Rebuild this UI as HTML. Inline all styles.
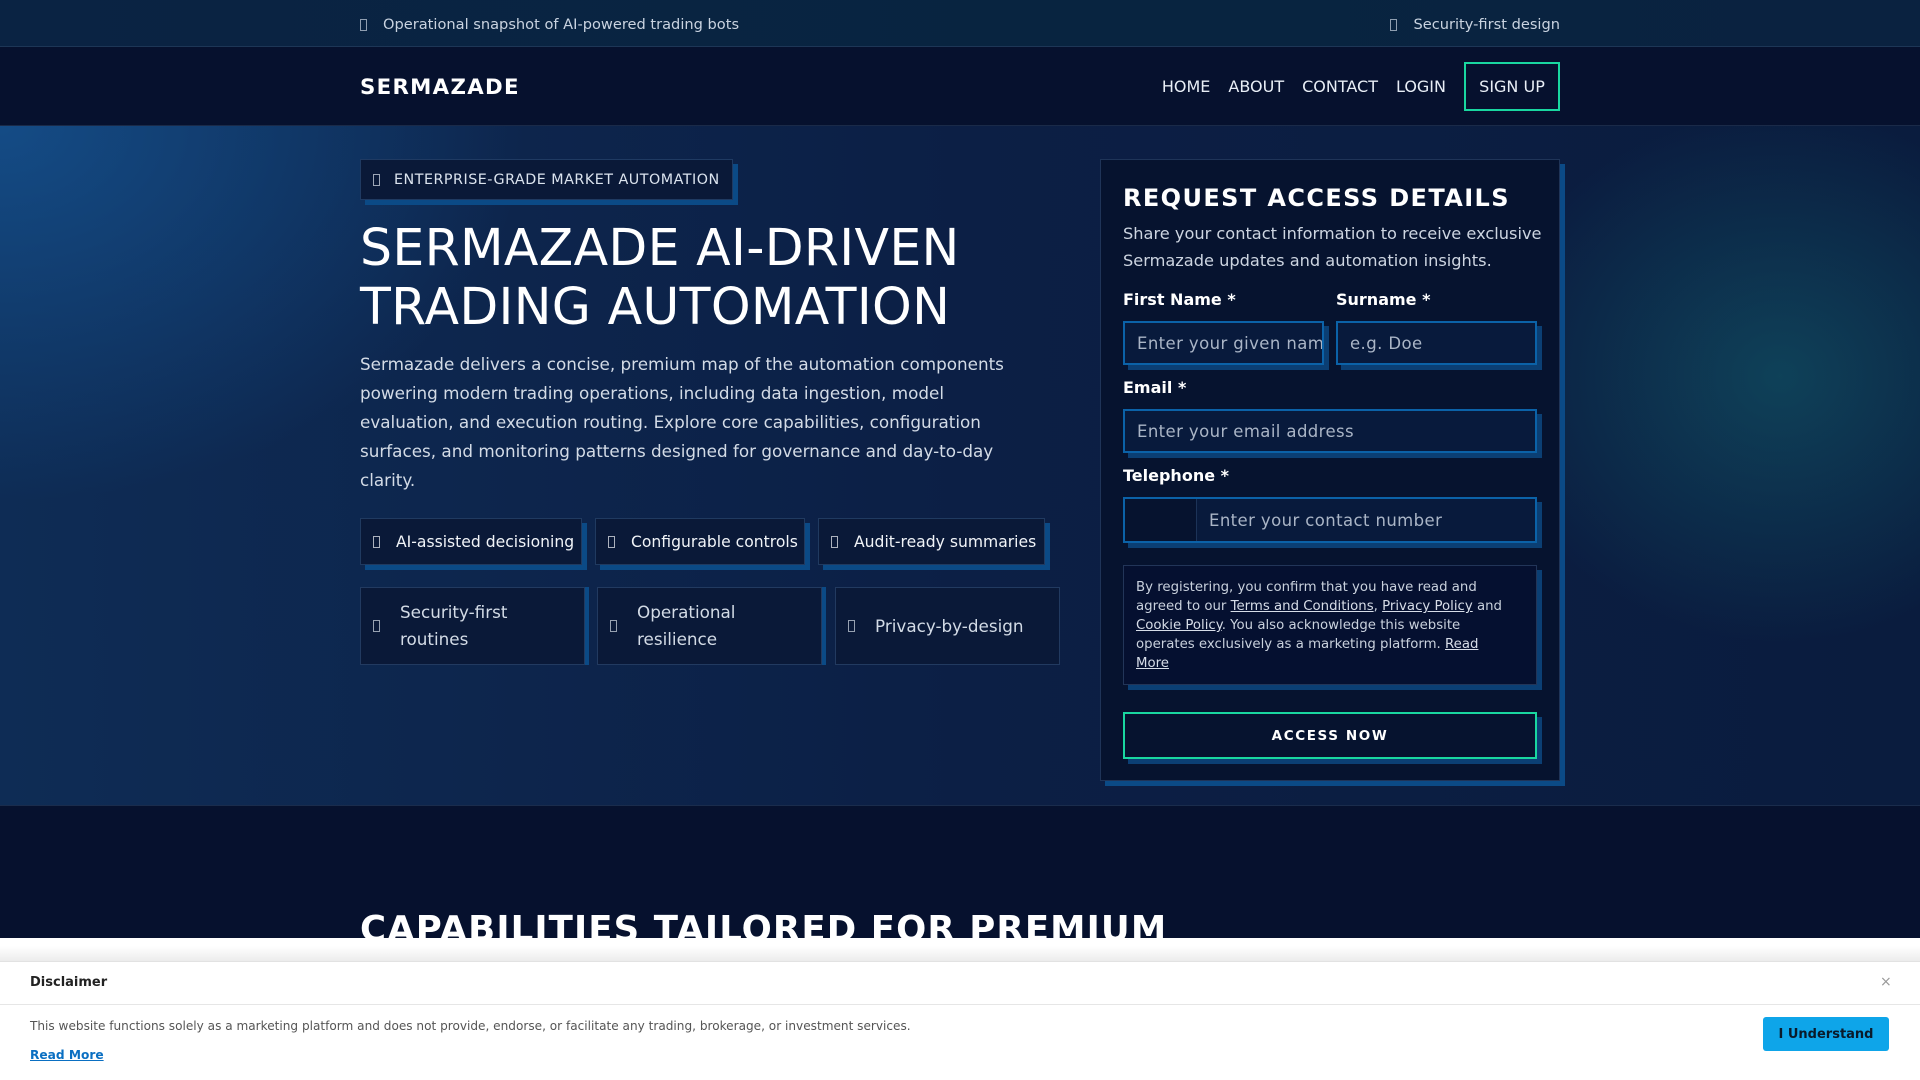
<!DOCTYPE html>
<html><head><meta charset="utf-8"><style>
*{box-sizing:border-box;margin:0;padding:0}
body{width:1920px;height:1080px;overflow:hidden;background:#06112e;font-family:"DejaVu Sans","Liberation Sans",sans-serif;color:#fff;position:relative}
.tofu{display:inline-block;width:7px;height:12px;border:1px solid currentColor;opacity:.7;vertical-align:middle}
.top{position:absolute;left:0;top:0;width:1920px;height:47px;background:linear-gradient(90deg,#0a2343,#082440 60%,#0a2240);border-bottom:1px solid #1d3656;color:#c9d3e0;font-size:14.6px}
.top .l{position:absolute;left:360px;top:16px}
.top .r{position:absolute;right:360px;top:16px}
.top .tofu{margin-right:16px}
.nav{position:absolute;left:0;top:47px;width:1920px;height:79px;background:#06112e;border-bottom:1px solid #1a2a48}
.logo{position:absolute;left:360px;top:28px;font-weight:bold;font-size:21.3px;letter-spacing:1.3px}
.links{position:absolute;right:360px;top:15px;display:flex;align-items:center;font-size:16px;color:#e8eef6}
.links span{margin-right:18px}
.signup{border:2px solid #19d7a0;height:49px;width:96px;display:flex;align-items:center;justify-content:center;margin-right:0!important}
.hero{position:absolute;left:0;top:126px;width:1920px;height:680px;background:
radial-gradient(ellipse 420px 380px at 1780px 250px,rgba(20,110,120,.45),transparent 70%),
radial-gradient(ellipse 700px 500px at 0px 0px,rgba(22,86,150,.75),transparent 75%),
linear-gradient(90deg,#0e2c55,#0c1f45 50%,#0a1c3e);border-bottom:1px solid #1a2c4c}
.badge{position:absolute;left:360px;top:159px;width:373px;height:41px;background:#0a1938;border:1px solid #1f3a62;box-shadow:5px 5px 0 #0b4a86;font-size:14.3px;letter-spacing:.5px;color:#dbe3ee;padding:12px 0 0 12px;white-space:nowrap}
.badge .tofu{margin-right:14px}
h1{position:absolute;left:360px;top:218px;font-weight:normal;font-size:50.5px;line-height:59px;letter-spacing:.3px}
.para{position:absolute;left:360px;top:350px;width:680px;font-size:16.8px;line-height:29px;color:#d3dbe6}
.chip{position:absolute;top:518px;height:47px;background:#0a1938;border:1px solid #203a60;box-shadow:5px 5px 0 #0b4a86;font-size:15.6px;display:flex;align-items:center;padding-left:12px;color:#f1f4f8;white-space:nowrap}
.chip .tofu{margin-right:16px}
.card{position:absolute;top:587px;width:225px;height:78px;background:#0a1938;border:1px solid #223a60;font-size:16.8px;line-height:27px;display:flex;align-items:center;padding-left:12px;color:#d3dbe6}
.card .tofu{margin-right:20px;flex:none}
.form{position:absolute;left:1100px;top:159px;width:460px;height:622px;background:#06132f;border:1px solid #1f3458;box-shadow:5px 5px 0 #0b4a86;padding:0 23px}
.form h2{position:absolute;left:22px;top:24px;font-size:24px;letter-spacing:1.4px;font-weight:bold}
.sub{position:absolute;left:22px;top:60px;width:430px;font-size:16.2px;line-height:27px;color:#cdd5e1}
.lab{position:absolute;font-weight:bold;font-size:16px}
.inp{position:absolute;height:44px;border:2px solid #0b62a8;background:#081a3c;box-shadow:5px 5px 0 #0b3f74;font-size:16.5px;color:#aab5c6;padding:11px 0 0 12px;letter-spacing:.4px;white-space:nowrap;overflow:hidden}
.consent{position:absolute;left:22px;top:405px;width:414px;height:120px;border:1px solid #223558;background:#051030;box-shadow:5px 5px 0 #0b3f74;font-size:13.3px;line-height:19px;color:#c9d1dd;padding:12px 22px 12px 12px}
.consent u{color:#d7dde8}
.btn{position:absolute;left:22px;top:552px;width:414px;height:47px;border:2px solid #19d7a0;box-shadow:5px 5px 0 #0b3f74;font-weight:bold;font-size:13.5px;letter-spacing:1.6px;display:flex;align-items:center;justify-content:center}
.cap{position:absolute;left:360px;top:909px;font-weight:bold;font-size:35.5px;letter-spacing:1.1px}
.disc{position:absolute;left:0;top:938px;width:1920px;height:142px;background:linear-gradient(#fff 0,#fff 8px,#ececec 23px,#fff 23px);color:#222}
.disc .hd{position:absolute;left:0;top:23px;width:1920px;height:44px;border-top:1px solid #e2e2e2;border-bottom:1px solid #e6e6e6}
.disc .t{position:absolute;left:30px;top:37px;font-weight:bold;font-size:13px}
.disc .x{position:absolute;left:1880px;top:36px;font-size:14px;color:#999}
.disc .m{position:absolute;left:30px;top:81px;font-size:12.1px;color:#555}
.disc .rm{position:absolute;left:30px;top:110px;font-size:12.2px;font-weight:bold;color:#0a6fc2;text-decoration:underline}
.disc .ok{position:absolute;left:1763px;top:79px;width:126px;height:34px;background:#0ea5e9;border-radius:3px;font-weight:bold;font-size:13px;color:#0a1a2a;display:flex;align-items:center;justify-content:center}
</style></head><body>
<div class="top"><span class="l"><span class="tofu"></span>Operational snapshot of AI-powered trading bots</span><span class="r"><span class="tofu"></span>Security-first design</span></div>
<div class="nav"><div class="logo">SERMAZADE</div>
<div class="links"><span>HOME</span><span>ABOUT</span><span>CONTACT</span><span>LOGIN</span><span class="signup">SIGN UP</span></div></div>
<div class="hero"></div>
<div class="badge"><span class="tofu"></span>ENTERPRISE-GRADE MARKET AUTOMATION</div>
<h1>SERMAZADE AI-DRIVEN<br>TRADING AUTOMATION</h1>
<div class="para">Sermazade delivers a concise, premium map of the automation components powering modern trading operations, including data ingestion, model evaluation, and execution routing. Explore core capabilities, configuration surfaces, and monitoring patterns designed for governance and day-to-day clarity.</div>
<div class="chip" style="left:360px;width:222px"><span class="tofu"></span>AI-assisted decisioning</div>
<div class="chip" style="left:595px;width:210px"><span class="tofu"></span>Configurable controls</div>
<div class="chip" style="left:818px;width:227px"><span class="tofu"></span>Audit-ready summaries</div>
<div class="card" style="left:360px;box-shadow:4px 0 0 #0b4a86"><span class="tofu"></span>Security-first<br>routines</div>
<div class="card" style="left:597px;box-shadow:4px 0 0 #0b4a86"><span class="tofu"></span>Operational<br>resilience</div>
<div class="card" style="left:835px"><span class="tofu"></span>Privacy-by-design</div>
<div class="form">
<h2>REQUEST ACCESS DETAILS</h2>
<div class="sub">Share your contact information to receive exclusive Sermazade updates and automation insights.</div>
<div class="lab" style="left:22px;top:130px">First Name *</div>
<div class="lab" style="left:235px;top:130px">Surname *</div>
<div class="inp" style="left:22px;top:161px;width:201px">Enter your given name</div>
<div class="inp" style="left:235px;top:161px;width:201px">e.g. Doe</div>
<div class="lab" style="left:22px;top:218px">Email *</div>
<div class="inp" style="left:22px;top:249px;width:414px">Enter your email address</div>
<div class="lab" style="left:22px;top:306px">Telephone *</div>
<div class="inp" style="left:22px;top:337px;width:414px;height:46px;padding:0"><div style="position:absolute;left:0;top:0;width:72px;height:42px;border-right:1px solid #1c3358;background:#06132f"></div><div style="position:absolute;left:84px;top:12px">Enter your contact number</div></div>
<div class="consent">By registering, you confirm that you have read and agreed to our <u>Terms and Conditions</u>, <u>Privacy Policy</u> and <u>Cookie Policy</u>. You also acknowledge this website operates exclusively as a marketing platform. <u>Read More</u></div>
<div class="btn">ACCESS NOW</div>
</div>
<div class="cap">CAPABILITIES TAILORED FOR PREMIUM</div>
<div class="disc"><div class="hd"></div><div class="t">Disclaimer</div><div class="x">×</div>
<div class="m">This website functions solely as a marketing platform and does not provide, endorse, or facilitate any trading, brokerage, or investment services.</div>
<div class="rm">Read More</div><div class="ok">I Understand</div></div>
</body></html>
